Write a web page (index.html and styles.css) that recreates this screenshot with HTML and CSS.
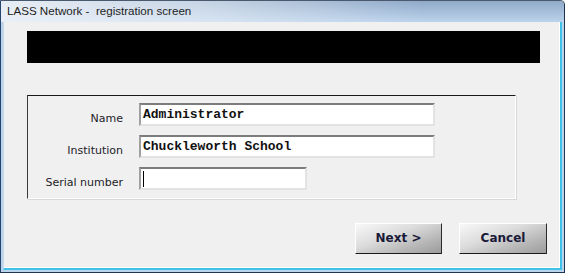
FILE: index.html
```html
<!DOCTYPE html>
<html lang="en">
<head>
    <meta charset="UTF-8">
    <meta name="viewport" content="width=device-width, initial-scale=1.0">
    <title>LASS Network - registration screen</title>
    <link rel="stylesheet" href="styles.css">
</head>
<body>

    <div class="window">
        <div class="titlebar">LASS Network -&nbsp; registration screen</div>

        <div class="client">
            <div class="banner"></div>

            <div class="group">
                <div class="label">Name</div>
                <div class="field wide">Administrator</div>

                <div class="label">Institution</div>
                <div class="field wide">Chuckleworth School</div>

                <div class="label">Serial number</div>
                <div class="field short"><span class="caret"></span></div>
            </div>

            <div class="buttons">
                <div class="button next">Next &gt;</div>
                <div class="button">Cancel</div>
            </div>
        </div>
    </div>

</body>
</html>
```

FILE: styles.css
```css
body {
    margin: 0;
    background: #f0f0f0;
    font-family: "Liberation Sans", Arial, sans-serif;
}
.window {
    width: 565px;
    height: 273px;
    box-sizing: border-box;
    display: flex;
    flex-direction: column;
    border-left: 1px solid #24456e;
    border-right: 1px solid #1d3553;
    border-bottom: 1px solid #1d3553;
    border-top: 1px solid #4a5a6e;
    border-top-right-radius: 5px;
    background: #bcd3ec;
    overflow: hidden;
}
.titlebar {
    height: 21px;
    padding-left: 6px;
    line-height: 20px;
    font-size: 11.6px;
    color: #1e1e1e;
    background:
        linear-gradient(to right, rgba(236, 241, 247, 0.95) 0%, rgba(236, 241, 247, 0.6) 35%, rgba(236, 241, 247, 0) 75%),
        linear-gradient(#8fa9c8, #bcd3ec);
}
.client {
    flex: 1;
    margin: 0 2px 2px 2px;
    border-right: 2px solid #3ec2ea;
    border-bottom: 2px solid #3ec2ea;
    border-left: 1px solid #c7dbef;
    box-shadow: inset -1px -1px 0 #ffffff;
    background: #f0f0f0;
    display: flex;
    flex-direction: column;
    padding-left: 23px;
}
.banner {
    margin-top: 9px;
    width: 513px;
    height: 32px;
    background: #000;
}
.group {
    margin-top: 32px;
    box-sizing: border-box;
    width: 489px;
    height: 104px;
    border-top: 1px solid #1a1a1a;
    border-left: 1px solid #3a3a3a;
    border-right: 1px solid #ffffff;
    border-bottom: 1px solid #ffffff;
    box-shadow: 1px 1px 0 #d8d8d8;
    display: grid;
    grid-template-columns: 95px auto;
    grid-auto-rows: 23px;
    column-gap: 16px;
    row-gap: 9px;
    padding-top: 7px;
}
.label {
    text-align: right;
    font-family: "DejaVu Sans", Tahoma, sans-serif;
    font-size: 11px;
    line-height: 23px;
    color: #1c1c28;
    padding-top: 4px;
}
.field {
    box-sizing: border-box;
    height: 23px;
    background: #fff;
    border-style: solid;
    border-width: 2px;
    border-color: #7c7c7c #e3e3e3 #e3e3e3 #a0a0a0;
    padding-left: 2px;
    font-family: "Liberation Mono", "Courier New", monospace;
    font-weight: bold;
    font-size: 13px;
    line-height: 18px;
    color: #111;
    display: flex;
    align-items: center;
}
.wide {
    width: 296px;
}
.short {
    width: 168px;
}
.caret {
    width: 1px;
    height: 16px;
    background: #000;
}
.buttons {
    margin-top: 24px;
    display: flex;
    justify-content: flex-end;
    gap: 17px;
    padding-right: 13px;
}
.button {
    box-sizing: border-box;
    width: 88px;
    height: 31px;
    border-top: 1px solid #ffffff;
    border-left: 1px solid #ffffff;
    border-right: 1px solid #2a2a2a;
    border-bottom: 1px solid #1a1a1a;
    background: linear-gradient(160deg, #f8f8f8 0%, #dcdcdc 40%, #b4b4b4 75%, #9c9c9c 100%);
    font-family: "DejaVu Sans", Tahoma, sans-serif;
    font-size: 12px;
    font-weight: bold;
    color: #1a1a38;
    text-align: center;
    line-height: 29px;
}
.next {
    width: 87px;
}
```
